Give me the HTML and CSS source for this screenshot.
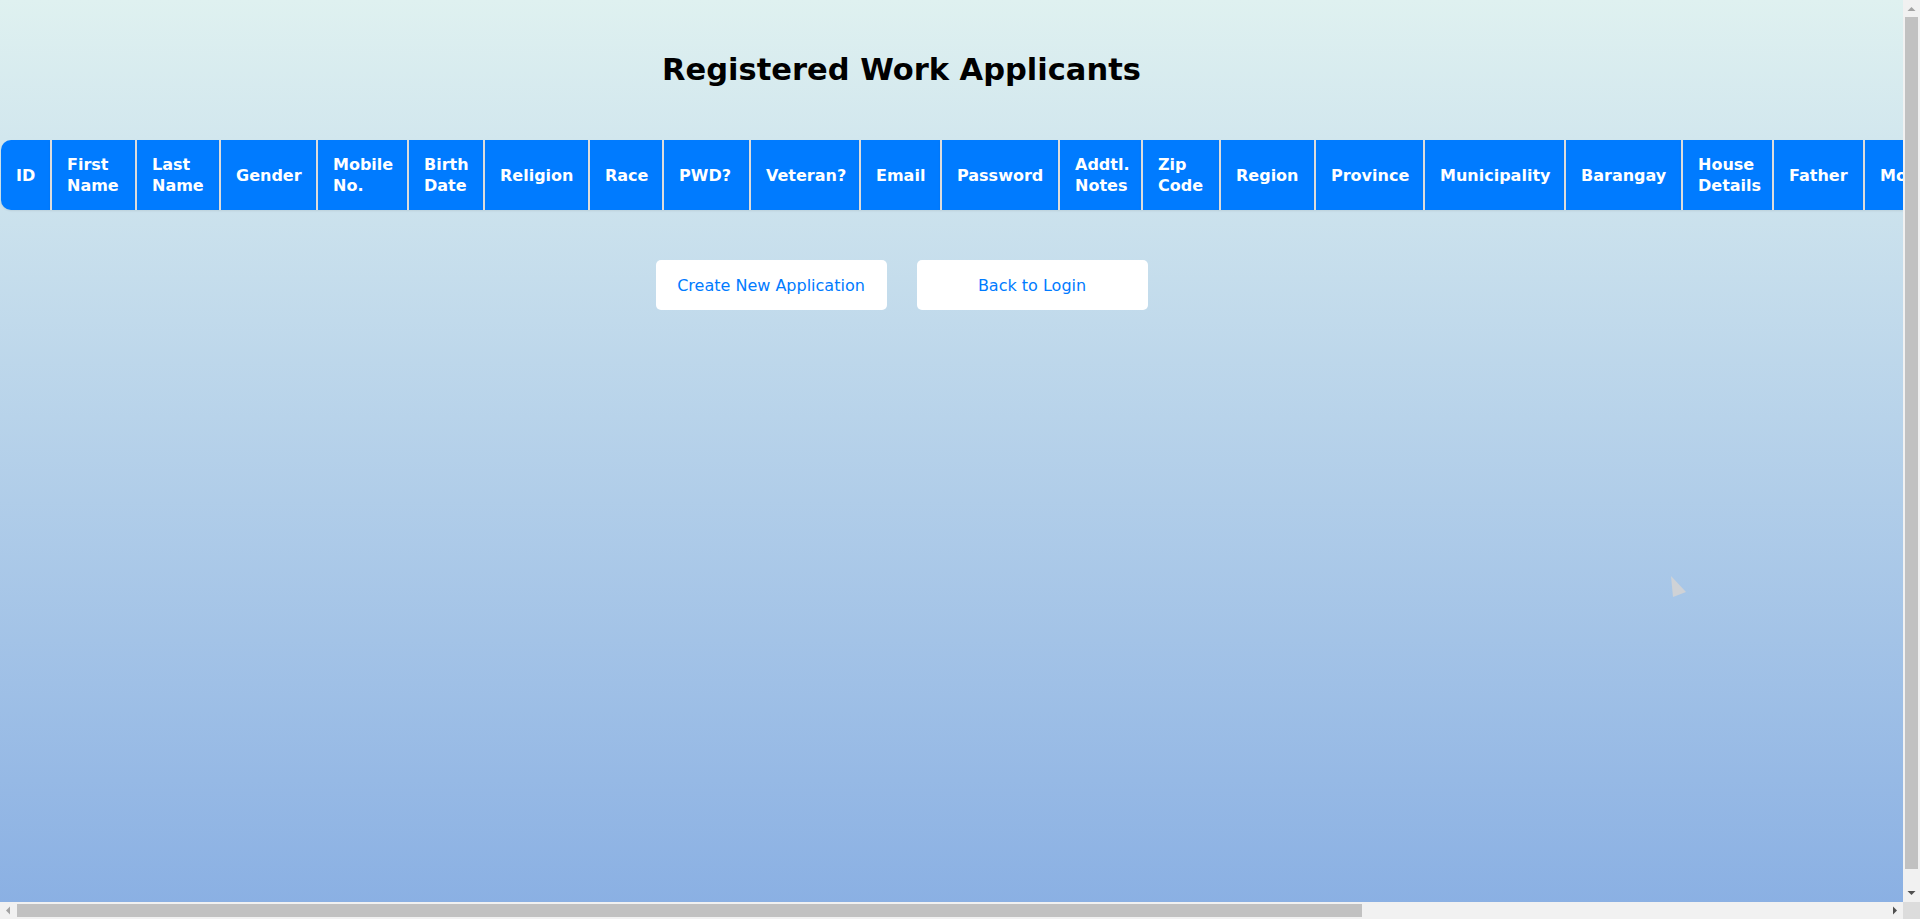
FILE: index.html
```html
<!DOCTYPE html>
<html lang="en">
<head>
<meta charset="utf-8">
<title>Registered Work Applicants</title>
<link rel="stylesheet" href="styles.css">
</head>
<body>
  <div class="viewport">
    <div class="page">
      <h1 class="title">Registered Work Applicants</h1>
      <table class="applicants">
        <thead>
          <tr>
            <th>ID</th>
            <th>First Name</th>
            <th>Last Name</th>
            <th>Gender</th>
            <th>Mobile No.</th>
            <th>Birth Date</th>
            <th>Religion</th>
            <th>Race</th>
            <th>PWD?</th>
            <th>Veteran?</th>
            <th>Email</th>
            <th>Password</th>
            <th>Addtl. Notes</th>
            <th>Zip Code</th>
            <th>Region</th>
            <th>Province</th>
            <th>Municipality</th>
            <th>Barangay</th>
            <th>House Details</th>
            <th>Father</th>
            <th>Mother</th>
            <th>Guardian</th>
            <th>Occupation</th>
            <th>Education</th>
            <th>Skills</th>
            <th>Date Applied</th>
            <th>Actions</th>
          </tr>
        </thead>
        <tbody></tbody>
      </table>
      <div class="actions">
        <a class="btn" href="#">Create New Application</a>
        <a class="btn" href="#">Back to Login</a>
      </div>
    </div>
    <svg class="cursor" width="18" height="24" viewBox="0 0 18 24" aria-hidden="true">
      <polygon points="1,1 16,17 3,22" fill="#cfd2d6"/>
    </svg>
  </div>

  <div class="vscroll">
    <div class="sb-btn">
      <svg width="17" height="17" viewBox="0 0 17 17"><polygon points="4.5,11 12.5,11 8.5,7" fill="#a3a3a3"/></svg>
    </div>
    <div class="sb-track vtrack"><div class="sb-thumb vthumb"></div></div>
    <div class="sb-btn">
      <svg width="17" height="17" viewBox="0 0 17 17"><polygon points="4.5,6 12.5,6 8.5,10" fill="#505050"/></svg>
    </div>
  </div>

  <div class="hscroll">
    <div class="sb-btn">
      <svg width="17" height="17" viewBox="0 0 17 17"><polygon points="10,4.5 10,12.5 6,8.5" fill="#a3a3a3"/></svg>
    </div>
    <div class="sb-track htrack"><div class="sb-thumb hthumb"></div></div>
    <div class="sb-btn">
      <svg width="17" height="17" viewBox="0 0 17 17"><polygon points="7,4.5 7,12.5 11,8.5" fill="#505050"/></svg>
    </div>
  </div>

  <div class="corner"></div>
</body>
</html>
```

FILE: styles.css
```css
* {
  box-sizing: border-box;
}

html,
body {
  margin: 0;
  height: 100%;
}

body {
  display: grid;
  grid-template-columns: 1903px 17px;
  grid-template-rows: 902px 17px;
  height: 100vh;
  overflow: hidden;
  font-family: "DejaVu Sans", "Liberation Sans", sans-serif;
  color: #000;
  background: #f1f1f1;
}

/* page viewport */
.viewport {
  position: relative;
  overflow: hidden;
  background: linear-gradient(to bottom, #dff1f0 0%, #89afe3 100%);
  background-size: 100% 919px;
  background-repeat: no-repeat;
}

.page {
  width: 1803px;
  padding-top: 50px;
  display: flex;
  flex-direction: column;
  align-items: center;
}

.title {
  margin: 0;
  font-size: 30.5px;
  line-height: 40px;
  font-weight: 700;
  color: #000;
  text-align: center;
}

.applicants {
  align-self: flex-start;
  margin: 50px 0 0 1px;
  width: 2643px;
  table-layout: fixed;
  border-collapse: separate;
  border-spacing: 0;
  flex: none;
}

.applicants th {
  height: 70px;
  padding: 14px 15px;
  background: #007bff;
  color: #fff;
  font-size: 16px;
  line-height: 21px;
  font-weight: 700;
  text-align: left;
  vertical-align: middle;
  border-left: 2px solid #dcdcdc;
  box-shadow: 0 1px 2px rgba(0, 0, 0, 0.08);
}

.applicants th:first-child {
  border-left: none;
  border-radius: 10px 0 0 10px;
}

.applicants th:nth-child(1) { width: 49px; }
.applicants th:nth-child(2) { width: 85px; }
.applicants th:nth-child(3) { width: 84px; }
.applicants th:nth-child(4) { width: 97px; }
.applicants th:nth-child(5) { width: 91px; }
.applicants th:nth-child(6) { width: 76px; }
.applicants th:nth-child(7) { width: 105px; }
.applicants th:nth-child(8) { width: 74px; }
.applicants th:nth-child(9) { width: 87px; }
.applicants th:nth-child(10) { width: 110px; }
.applicants th:nth-child(11) { width: 81px; }
.applicants th:nth-child(12) { width: 118px; }
.applicants th:nth-child(13) { width: 83px; }
.applicants th:nth-child(14) { width: 78px; }
.applicants th:nth-child(15) { width: 95px; }
.applicants th:nth-child(16) { width: 109px; }
.applicants th:nth-child(17) { width: 141px; }
.applicants th:nth-child(18) { width: 117px; }
.applicants th:nth-child(19) { width: 91px; }
.applicants th:nth-child(20) { width: 91px; }
.applicants th:nth-child(21) { width: 96px; }
.applicants th:nth-child(22) { width: 106px; }
.applicants th:nth-child(23) { width: 125px; }
.applicants th:nth-child(24) { width: 116px; }
.applicants th:nth-child(25) { width: 80px; }
.applicants th:nth-child(26) { width: 110px; }
.applicants th:nth-child(27) { width: 148px; }

.actions {
  margin-top: 50px;
  display: flex;
  gap: 30px;
}

.btn {
  display: flex;
  align-items: center;
  justify-content: center;
  width: 231px;
  height: 50px;
  background: #fff;
  border-radius: 5px;
  color: #007bff;
  font-size: 16px;
  font-weight: 400;
  text-decoration: none;
}

.cursor {
  position: absolute;
  left: 1670px;
  top: 575px;
}

/* scrollbars */
.vscroll {
  display: flex;
  flex-direction: column;
  background: #f1f1f1;
}

.hscroll {
  display: flex;
  background: #f1f1f1;
}

.sb-btn {
  flex: none;
  width: 17px;
  height: 17px;
  display: flex;
}

.sb-track {
  flex: 1;
  display: flex;
}

.vtrack {
  flex-direction: column;
}

.sb-thumb {
  background: #c1c1c1;
}

.vthumb {
  height: 852px;
  margin: 0 2px;
}

.hthumb {
  width: 1345px;
  margin: 2px 0;
}

.corner {
  background: #dcdcdc;
}
```
